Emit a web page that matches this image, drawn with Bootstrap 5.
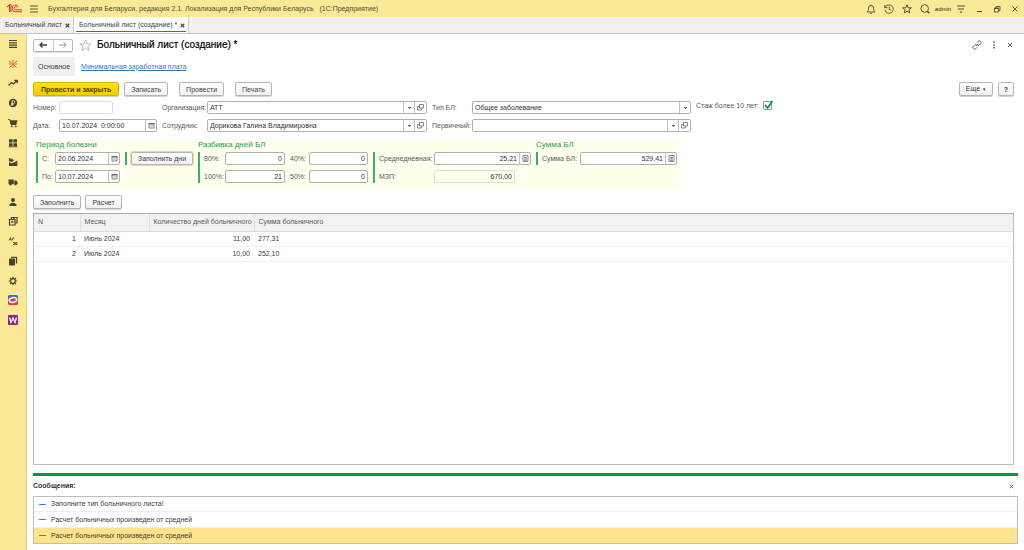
<!DOCTYPE html>
<html lang="ru">
<head>
<meta charset="utf-8">
<meta name="viewport" content="width=device-width, initial-scale=1">
<title>Больничный лист (создание)</title>
<link href="https://cdn.jsdelivr.net/npm/bootstrap@5.3.0/dist/css/bootstrap.min.css" rel="stylesheet">
<script src="https://cdn.jsdelivr.net/npm/bootstrap@5.3.0/dist/js/bootstrap.bundle.min.js" defer></script>
<style>
  body { font: 7px/10px "Liberation Sans", Arial, sans-serif; color: #404040; background: #fff; }
  svg { display: block; fill: none; stroke: currentColor; }
  .ic { width: 10px; height: 10px; }
  .plain { border: 0; background: none; padding: 0; color: inherit; display: grid; place-items: center; }

  .titlebar { height: 17px; background: #faea98; color: #4d4a38; }
  .titlebar .logo { width: 17px; height: 11px; margin-left: 6px; }
  .titlebar .burger { width: 20px; margin-left: 1px; }
  .titlebar .caption { margin-left: 4px; white-space: pre; }
  .tools .plain { width: 18px; height: 17px; }
  .tools .user { font-size: 6px; color: #222; }

  .tabbar { height: 17px; background: #f1f1f1; border-bottom: 1px solid #c4c4c4; }
  .doc-tab { padding: 0 4px 0 5px; gap: 3px; border-right: 1px solid #ccc; color: #444; }
  .doc-tab.first { width: 74px; }
  .doc-tab.current { width: 115px; background: linear-gradient(#009846, #009846) 2px 14px / 110px 1px no-repeat #fff; }
  .doc-tab a { color: inherit; line-height: 14px; text-decoration: none; flex: 1; white-space: nowrap; }
  .doc-tab .ic { width: 5px; height: 5px; }

  .sidebar { width: 27px; background: #faea98; border-right: 1px solid #e9d67a; flex: none; }
  .sections { height: 296px; display: grid; grid-template-rows: repeat(15, 1fr); color: #46432f; }
  .sections a { color: inherit; display: grid; place-items: center; }

  .workspace { padding: 4px 6px 6px; min-width: 0; }
  .history-nav { border: 1px solid #b9b9b9; border-radius: 2px; width: 40px; height: 13px; box-shadow: 0 1px 0 #ddd; }
  .history-nav .plain { flex: 1; }
  .history-nav .plain + .plain { border-left: 1px solid #ccc; color: #999; }
  h1 { font-size: 10px; line-height: 14px; color: #000; margin: 0; font-weight: 500; -webkit-text-stroke: .2px #000; }
  .star { width: 14px; height: 14px; margin: 0 5px; color: #b5b5b5; }
  .page-links { margin-top: 5px; height: 19px; gap: 6px; }
  .page-links span { background: #f0f0f0; border-radius: 2px; padding: 0 5px; line-height: 19px; height: 19px; }
  .page-links a { color: #3a75b8; text-decoration: underline; }

  .cmd { font-size: 7px; line-height: 11px; height: 14px; padding: 0 6px; border: 1px solid #b4b4b4; border-radius: 2px; color: #404040; background: linear-gradient(#fff, #f1f1f1); box-shadow: 0 1px 0 #d2d2d2; white-space: nowrap; }
  .cmd:hover { color: #404040; background: #f1f1f1; border-color: #b4b4b4; }
  .cmd.main { padding: 0 7px; background: linear-gradient(#ffdf18, #f5cc00); border-color: #d5b400; font-weight: 700; color: #4a4210; }
  .commands { margin-top: 6px; padding-right: 4px; gap: 11px; }
  .cmd.ask { width: 16px; padding: 0; font-weight: 700; }
  .caret { font-size: 5px; margin-left: 1px; }
  .pair { gap: 5px; }
  .fill-row { margin-top: 6px; }

  .fields { display: grid; grid-template-columns: 26px 98px 50px 220px 45px 219px auto; gap: 5px 0; margin-top: 5px; align-items: center; justify-content: start; }
  .fields .sp { padding-left: 5px; }
  .fields .sp, .fields .lb { white-space: nowrap; color: #5a5a5a; }
  .number { width: 54px; }
  .box { height: 13px; border: 1px solid #b0b0b0; border-radius: 2px; background: #fff; display: flex; min-width: 0; overflow: hidden; }
  .box.off { border-color: #dedede; background: transparent; }
  .box input, .box select { flex: 1; min-width: 0; width: 100%; border: 0; border-radius: 0; background: transparent; color: #333; font-size: 7px; line-height: 11px; padding: 0 2px; min-height: 0; height: 11px; box-shadow: none; appearance: none; }
  .pick { position: relative; flex: 1; min-width: 0; display: flex; }
  .pick::after { content: ""; position: absolute; right: 0; top: 0; width: 11px; height: 11px; border-left: 1px solid #c4c4c4; pointer-events: none; background: linear-gradient(#666, #666) 4px 5px / 3px 1px no-repeat, linear-gradient(#666, #666) 5px 6px / 1px 1px no-repeat; }
  .box .plain { width: 11px; height: 11px; border-left: 1px solid #c4c4c4; color: #6a6a6a; flex: none; }
  .pick + .plain { width: 12px; }
  .box .ic { width: 7px; height: 7px; }
  .num input { text-align: right; }
  .seniority { gap: 4px; padding-left: 5px; white-space: nowrap; color: #5a5a5a; margin-top: -4px; }
  .seniority input { appearance: none; width: 9px; height: 9px; margin: 0; border: 1px solid #999; border-radius: 1px; background: #fff; display: block; }
  .tick { position: relative; }
  .tick svg { position: absolute; left: 0; top: -1px; width: 11px; height: 10px; color: #009846; pointer-events: none; }

  .summary { background: #ffffee; width: 647px; height: 50px; margin-top: 7px; padding: 1px 3px 0; gap: 5px; color: #5a5a5a; }
  .summary h2 { font-size: 8px; line-height: 10px; height: 12px; color: #15a050; margin: 0; white-space: nowrap; font-weight: 400; }
  .pane { border-left: 2px solid #3fae72; padding-left: 4px; display: grid; row-gap: 5px; align-items: center; }
  .pane label { white-space: nowrap; }
  .period { grid-template-columns: 13px 65px; }
  .split { grid-template-columns: 21px 60px 5px 19px 59px; }
  .average { grid-template-columns: 55px 81px 16px; }
  .average .wide { grid-column: 2 / 4; }
  .total { grid-template-columns: 38px 97px; }
  .fill { box-shadow: 0 0 0 1px #fbdc76; width: 62px; height: 13px; padding: 0; }

  .lines { border: 1px solid #bdbdbd; border-top-color: #aaa; flex: 1; margin: 4px 4px 8px 0; min-height: 120px; }
  .lines table { width: 100%; margin: 0; font-size: 7px; color: #404040; table-layout: fixed; }
  .lines th { background: #f2f2f2; font-weight: 400; height: 17px; padding: 0 4px; border: 0; border-right: 1px solid #e0e0e0; border-bottom: 1px solid #dcdcdc; color: #5a5a5a; white-space: nowrap; vertical-align: middle; }
  .lines td { height: 15px; padding: 0 4px; border: 0; border-bottom: 1px solid #f0f0f0; vertical-align: middle; }
  .lines th:last-child { border-right: 0; }
  .col-n { width: 46px; }
  .col-month { width: 69px; }
  .col-days { width: 105px; }

  .messages { border-top: 3px solid #009846; }
  .messages h2 { font-size: 7px; line-height: 10px; font-weight: 700; color: #333; margin: 0; }
  .messages header { height: 20px; padding-right: 4px; }
  .messages ul { border: 1px solid #bdbdbd; border-radius: 0; margin: 0; }
  .messages li { padding: 0 0 0 5px; height: 15px; gap: 5px; border: 0; border-bottom: 1px solid #eee; font-size: 7px; line-height: 10px; color: #404040; background: #fff; border-radius: 0; }
  .messages li + li { height: 16px; }
  .messages li.current { background: #ffe48d; border-bottom: 0; height: 15px; }
  .messages li::before { content: ""; width: 7px; height: 1px; background: #2f7fe0; }
</style>
</head>
<body class="d-flex flex-column min-vh-100">

<svg width="0" height="0" class="position-absolute" aria-hidden="true">
  <symbol id="x" viewBox="0 0 10 10"><path d="M1.5 1.5l7 7m0-7l-7 7"/></symbol>
  <symbol id="star" viewBox="0 0 14 14"><path d="M7 1l1.600 4.300 4.600.1-3.600 2.800 1.300 4.400L7 10l-3.900 2.600 1.300-4.400L.8 5.400l4.600-.1z"/></symbol>
  <symbol id="cal" viewBox="0 0 7 7"><path d="M1 1.500h5v4.500h-5z" stroke-width=".8"/><path d="M.6 1.800h5.800" stroke-width="1.600"/><path d="M2 4h3" stroke-width=".6"/></symbol>
  <symbol id="calc" viewBox="0 0 7 7"><path d="M1 .5h5v6H1zM2 2.500h3M2 4h3M2 5.300h3" stroke-width=".8"/></symbol>
  <symbol id="open" viewBox="0 0 7 7"><path d="M2.500.5h4v3.500h-4zM2.500 2.500h-2v3.500h4V4" stroke-width=".8"/></symbol>
</svg>

<header class="titlebar d-flex align-items-center">
  <svg class="logo" viewBox="0 0 17 11" style="color:#dc3a2d"><path d="M1 4l2.500-2V9M5 9V1.500H3.500" stroke-width="1.100"/><path d="M12.500 4.200a3.300 3.300 0 1 0-3.100 4.500H16M10.800 4.500a1.500 1.500 0 1 0-1.400 2.300H16" stroke-width="1"/></svg>
  <button class="plain burger" aria-label="Меню"><svg class="ic" viewBox="0 0 10 10"><path d="M1 2h8M1 5h8M1 8h8" stroke-width=".9"/></svg></button>
  <span class="caption">Бухгалтерия для Беларуси, редакция 2.1. Локализация для Республики Беларусь   (1С:Предприятие)</span>
  <div class="tools d-flex ms-auto">
    <button class="plain" aria-label="Уведомления"><svg class="ic" viewBox="0 0 10 10"><path d="M1 8c1.300-1 1.500-1.800 1.500-4a2.500 2.500 0 0 1 5 0c0 2.200.2 3 1.500 4zM5 .5v1M4 9.300h2" stroke-width=".9"/></svg></button>
    <button class="plain" aria-label="История"><svg class="ic" viewBox="0 0 10 10"><path d="M1.200 3.500a4.200 4.200 0 1 1-.2 2.500M.8 1v2.700h2.700M5.200 2.500V5.300l2 1" stroke-width=".9"/></svg></button>
    <button class="plain" aria-label="Избранное"><svg class="ic"><use href="#star" stroke-width="1.300"/></svg></button>
    <button class="plain" aria-label="Поиск"><svg class="ic" viewBox="0 0 10 10"><circle cx="4.700" cy="4.500" r="3.800" stroke-width=".9"/><path d="M7.300 7.200l2 2" stroke-width="1.600"/></svg></button>
    <button class="plain user">admin</button>
    <button class="plain" aria-label="Настройки"><svg class="ic" viewBox="0 0 10 10"><path d="M1 2h8M2 5h6"/><path d="M3.500 7.500h3L5 9.300z" fill="currentColor" stroke="none"/></svg></button>
    <button class="plain" aria-label="Свернуть"><svg class="ic" viewBox="0 0 10 10"><path d="M3 7.500h5"/></svg></button>
    <button class="plain" aria-label="Восстановить"><svg class="ic" viewBox="0 0 10 10"><path d="M2.500 4h4v4h-4zM4 4V2.500h4v4H6.500M2.500 4.500h4" stroke-width=".9"/></svg></button>
    <button class="plain" aria-label="Закрыть"><svg class="ic" viewBox="0 0 10 10"><path d="M2.500 2.500l5 5m0-5l-5 5" stroke-width=".9"/></svg></button>
  </div>
</header>

<nav class="tabbar d-flex">
  <div class="doc-tab first d-flex align-items-center"><a href="#">Больничный лист</a><button class="plain" aria-label="Закрыть"><svg class="ic"><use href="#x" stroke-width="2.200"/></svg></button></div>
  <div class="doc-tab current d-flex align-items-center"><a href="#">Больничный лист (создание) *</a><button class="plain" aria-label="Закрыть"><svg class="ic"><use href="#x" stroke-width="2.200"/></svg></button></div>
</nav>

<div class="d-flex flex-grow-1">
  <aside class="sidebar">
    <nav class="sections">
      <a href="#" aria-label="Разделы"><svg class="ic" viewBox="0 0 10 10"><path d="M1 1.500h8M1 3.800h8M1 6.100h8M1 8.400h8" stroke-width="1.200"/></svg></a>
      <a href="#" aria-label="Главное"><svg class="ic" viewBox="0 0 10 10" style="color:#dc5a35"><path d="M5 1v2.500M5 6.500V9M1 2l2.500 2M9 2L6.500 4M1 5h2M7 5h2M1.500 8.500L4 6.200M8.500 8.500L6 6.200"/><circle cx="5" cy="5" r="1"/></svg></a>
      <a href="#" aria-label="Руководителю"><svg class="ic" viewBox="0 0 10 10"><path d="M.5 7.500L3.500 4.500l2 1.500L9 2.500M6.300 2.300h3v3" stroke-width="1.300"/></svg></a>
      <a href="#" aria-label="Банк и касса"><svg class="ic" viewBox="0 0 10 10"><circle cx="5" cy="5" r="4.200" fill="currentColor" stroke="none"/><path d="M4 8V2.800h1.500a1.300 1.300 0 0 1 0 2.600H3M3 6.600h2.500" stroke="#faea98" stroke-width=".9"/></svg></a>
      <a href="#" aria-label="Продажи"><svg class="ic" viewBox="0 0 10 10"><path d="M.3 1.500h1.500L3 6.500h5.500"/><path d="M2 2.300h7.500L8.500 6H3z" fill="currentColor" stroke="none"/><circle cx="3.800" cy="8.400" r=".6"/><circle cx="7.700" cy="8.400" r=".6"/></svg></a>
      <a href="#" aria-label="Склад"><svg class="ic" viewBox="0 0 10 10" style="fill:currentColor;stroke:none"><path d="M1 1.200h3.600v3.300H1zM5.400 1.200H9v3.300H5.400zM1 5.300h3.600v3H1zM5.400 5.300H9v3H5.400zM.6 8.500h8.800v.7H.6z"/></svg></a>
      <a href="#" aria-label="Производство"><svg class="ic" viewBox="0 0 10 10" style="fill:currentColor;stroke:none"><path d="M1 9V5L3.500 6.200 6 5.500l3.300-2V9zM1 4.200V1h1.500v1.500L4.500 1.200v1.600h2L4 5z"/></svg></a>
      <a href="#" aria-label="Доставка"><svg class="ic" viewBox="0 0 10 10" style="fill:currentColor;stroke:none"><path d="M.5 2.500h5.300v4.700H.5zM6.300 3.500h2l1.300 1.700v2H6.300z"/><circle cx="2.500" cy="7.500" r="1.100"/><circle cx="7.500" cy="7.500" r="1.100"/></svg></a>
      <a href="#" aria-label="Кадры"><svg class="ic" viewBox="0 0 10 10" style="fill:currentColor;stroke:none"><circle cx="5" cy="3" r="2"/><path d="M1.500 9V7.300L4 5.700h2l2.500 1.600V9z"/></svg></a>
      <a href="#" aria-label="Зарплата"><svg class="ic" viewBox="0 0 10 10"><path d="M1.500 3.500h5.500v5.500h-5.500zM3.500 3.500V1.500h5.500v5.500H7" stroke-width="1.200"/><path d="M3 6h2.500M6 1.500v2.500" stroke-width="1.300"/></svg></a>
      <a href="#" aria-label="Операции"><svg class="ic" viewBox="0 0 10 10"><path d="M1 4.500l1.500-3 .7 3M1.500 3.500H3M4 4.500l.8-2.500h1.500M5 6.500h1.500v2H5M7.500 8.500v-2H9v2z" stroke-width=".8"/></svg></a>
      <a href="#" aria-label="Справочники"><svg class="ic" viewBox="0 0 10 10"><path d="M1.500 3h5v6h-5z" fill="currentColor"/><path d="M3 1.400h5.500V7.500" stroke-width="1.300"/></svg></a>
      <a href="#" aria-label="Администрирование"><svg class="ic" viewBox="0 0 10 10"><circle cx="5" cy="5" r="2.300" stroke-width="1.200"/><path d="M5 .8v1.700M5 7.500v1.700M.8 5h1.700M7.500 5h1.700M2 2l1.200 1.200M6.800 6.800L8 8M8 2L6.800 3.200M3.200 6.800L2 8" stroke-width="1.100"/></svg></a>
      <a href="#" aria-label="Сервис"><svg class="ic" viewBox="0 0 10 10"><path d="M1 0h8l1 1v4H0V1z" fill="#2c72e5" stroke="none"/><path d="M0 5h10v4l-1 1H1L0 9z" fill="#e23939" stroke="none"/><ellipse cx="5" cy="5" rx="3.700" ry="2.400" fill="#e23939" stroke="#fff" stroke-width="1.500" transform="rotate(-12 5 5)"/></svg></a>
      <a href="#" aria-label="Модуль W"><svg class="ic" viewBox="0 0 10 10"><rect width="10" height="10" rx="1" fill="#8b268c" stroke="none"/><path d="M1.500 2.500l1.500 5 2-4.500 2 4.500 1.500-5" stroke="#fff" stroke-width="1.200"/></svg></a>
    </nav>
  </aside>

  <main class="workspace d-flex flex-column flex-grow-1">
    <div class="d-flex align-items-center">
      <div class="history-nav d-flex">
        <button class="plain" aria-label="Назад"><svg class="ic" viewBox="0 0 10 10"><path d="M9 5H2M4.500 2.500L2 5l2.500 2.500" stroke-width="1.400"/></svg></button>
        <button class="plain" aria-label="Вперед"><svg class="ic" viewBox="0 0 10 10"><path d="M1 5h7M5.500 2.500L8 5 5.500 7.500"/></svg></button>
      </div>
      <button class="plain star" aria-label="В избранное"><svg width="13" height="13"><use href="#star"/></svg></button>
      <h1>Больничный лист (создание) *</h1>
      <div class="d-flex ms-auto">
        <button class="plain px-1" aria-label="Ссылка"><svg class="ic" viewBox="0 0 10 10"><path d="M4 6L6.500 3.500M5 2.500l1.200-1.200a1.600 1.600 0 0 1 2.400 2.400L7 5.300a1.600 1.600 0 0 1-1.500.3M5.300 7.200L3.800 8.700a1.600 1.600 0 0 1-2.400-2.400L3 4.700a1.600 1.600 0 0 1 1.500-.3" stroke-width=".8"/></svg></button>
        <button class="plain px-1" aria-label="Ещё"><svg width="8" height="10" viewBox="0 0 8 10"><path d="M4 1.500v1.600M4 4.200v1.600M4 6.900v1.600" stroke-width="1.300"/></svg></button>
        <button class="plain px-1" aria-label="Закрыть"><svg width="8" height="10" viewBox="0 0 8 10"><path d="M2 3l4 4M6 3L2 7" stroke-width=".8"/></svg></button>
      </div>
    </div>

    <nav class="page-links d-flex align-items-center"><span>Основное</span><a href="#">Минимальная заработная плата</a></nav>

    <div class="commands d-flex">
      <div class="pair d-flex"><button class="btn cmd main">Провести и закрыть</button><button class="btn cmd">Записать</button></div>
      <button class="btn cmd">Провести</button>
      <button class="btn cmd">Печать</button>
      <div class="pair d-flex ms-auto"><button class="btn cmd">Еще <span class="caret" aria-hidden="true">▾</span></button><button class="btn cmd ask">?</button></div>
    </div>

    <form class="fields">
      <label class="lb" for="no">Номер:</label>
      <div class="box off number"><input class="form-control" id="no"></div>
      <label class="sp" for="org">Организация:</label>
      <div class="box"><div class="pick"><select id="org"><option>АТТ</option></select></div><button type="button" class="plain" aria-label="Открыть"><svg class="ic"><use href="#open"/></svg></button></div>
      <label class="sp" for="kind">Тип БЛ:</label>
      <div class="box"><div class="pick"><select id="kind"><option>Общее заболевание</option></select></div></div>
      <div class="seniority d-flex align-items-center"><label for="ten">Стаж более 10 лет:</label><span class="tick"><input type="checkbox" id="ten" checked><svg viewBox="0 0 11 10"><path d="M2 5l2.500 3L9.500 1" stroke-width="1.800"/></svg></span></div>

      <label class="lb" for="date">Дата:</label>
      <div class="box"><input class="form-control" id="date" value="10.07.2024  0:00:00"><button type="button" class="plain" aria-label="Календарь"><svg class="ic"><use href="#cal"/></svg></button></div>
      <label class="sp" for="emp">Сотрудник:</label>
      <div class="box"><div class="pick"><select id="emp"><option>Дорикова Галина Владимировна</option></select></div><button type="button" class="plain" aria-label="Открыть"><svg class="ic"><use href="#open"/></svg></button></div>
      <label class="sp" for="prime">Первичный:</label>
      <div class="box"><div class="pick"><select id="prime"><option></option></select></div><button type="button" class="plain" aria-label="Открыть"><svg class="ic"><use href="#open"/></svg></button></div>
    </form>

    <form class="summary d-flex align-items-start">
      <section><h2>Период болезни</h2>
        <div class="pane period">
          <label for="from">С:</label><div class="box"><input class="form-control" id="from" value="20.06.2024"><button type="button" class="plain" aria-label="Календарь"><svg class="ic"><use href="#cal"/></svg></button></div>
          <label for="to">По:</label><div class="box"><input class="form-control" id="to" value="10.07.2024"><button type="button" class="plain" aria-label="Календарь"><svg class="ic"><use href="#cal"/></svg></button></div>
        </div></section>
      <section><h2></h2><div class="pane"><button type="button" class="btn cmd fill">Заполнить дни</button></div></section>
      <section><h2>Разбивка дней БЛ</h2>
        <div class="pane split">
          <label for="p80">80%:</label><div class="box num"><input class="form-control" id="p80" value="0"></div><i></i>
          <label for="p40">40%:</label><div class="box num"><input class="form-control" id="p40" value="0"></div>
          <label for="p100">100%:</label><div class="box num"><input class="form-control" id="p100" value="21"></div><i></i>
          <label for="p50">50%:</label><div class="box num"><input class="form-control" id="p50" value="0"></div>
        </div></section>
      <section><h2></h2>
        <div class="pane average">
          <label for="avg">Среднедневная:</label><div class="box num wide"><input class="form-control" id="avg" value="25,21"><button type="button" class="plain" aria-label="Калькулятор"><svg class="ic"><use href="#calc"/></svg></button></div>
          <label for="mzp">МЗП:</label><div class="box off num"><input class="form-control" id="mzp" value="670,00" readonly></div>
        </div></section>
      <section><h2>Сумма БЛ</h2>
        <div class="pane total">
          <label for="sum">Сумма БЛ:</label><div class="box num"><input class="form-control" id="sum" value="529,41"><button type="button" class="plain" aria-label="Калькулятор"><svg class="ic"><use href="#calc"/></svg></button></div>
        </div></section>
    </form>

    <div class="fill-row d-flex gap-1"><button class="btn cmd">Заполнить</button><button class="btn cmd">Расчет</button></div>

    <div class="lines">
      <table>
        <colgroup><col class="col-n"><col class="col-month"><col class="col-days"><col></colgroup>
        <thead><tr><th>N</th><th>Месяц</th><th class="text-end">Количество дней больничного</th><th>Сумма больничного</th></tr></thead>
        <tbody>
          <tr><td class="text-end">1</td><td>Июнь 2024</td><td class="text-end">11,00</td><td>277,31</td></tr>
          <tr><td class="text-end">2</td><td>Июль 2024</td><td class="text-end">10,00</td><td>252,10</td></tr>
        </tbody>
      </table>
    </div>

    <section class="messages">
      <header class="d-flex align-items-center justify-content-between"><h2>Сообщения:</h2><button class="plain" aria-label="Закрыть"><svg width="5" height="5"><use href="#x" stroke-width="1.600"/></svg></button></header>
      <ul class="list-group">
        <li class="list-group-item d-flex align-items-center">Заполните тип больничного листа!</li>
        <li class="list-group-item d-flex align-items-center">Расчет больничных произведен от средней</li>
        <li class="list-group-item d-flex align-items-center current">Расчет больничных произведен от средней</li>
      </ul>
    </section>
  </main>
</div>
</body>
</html>
